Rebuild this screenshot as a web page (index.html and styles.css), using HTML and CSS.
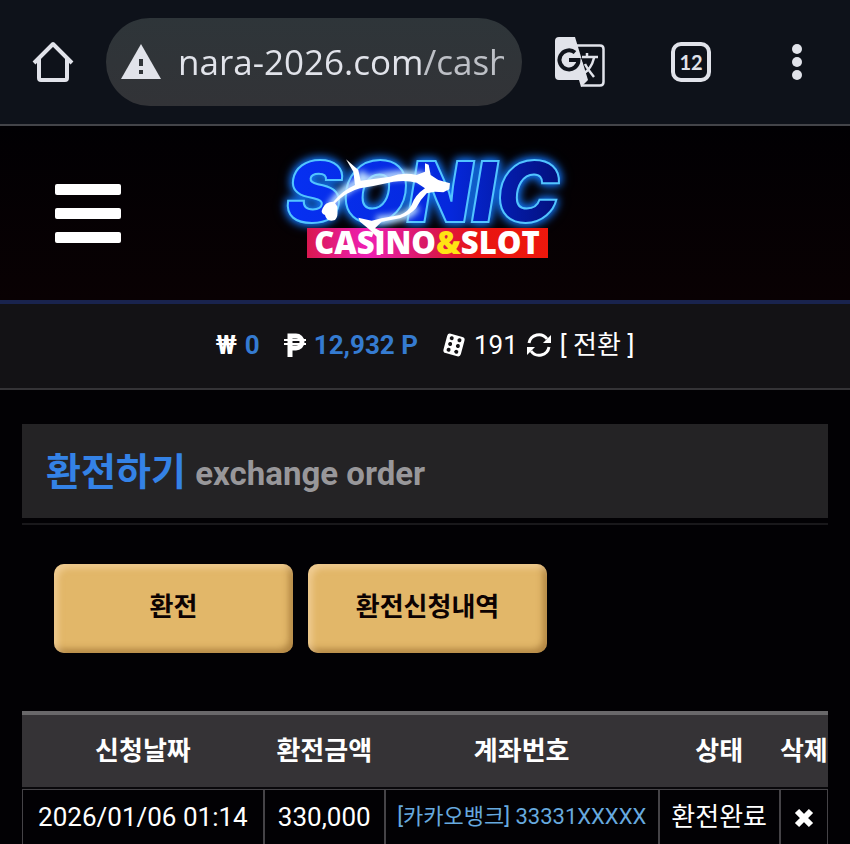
FILE: index.html
```html
<!DOCTYPE html>
<html lang="ko">
<head>
<meta charset="utf-8">
<meta name="viewport" content="width=device-width, initial-scale=1">
<title>환전하기</title>
<link rel="stylesheet" href="styles.css">
</head>
<body>
<div class="browser-bar">
  <button class="icon-button" aria-label="Home">
    <svg width="42" height="42" viewBox="0 0 42 42" fill="none" stroke="#e1e3ea" stroke-width="4" stroke-linejoin="round"><path d="M2 22 L21 3 L40 22 M7 18 V37 Q7 39 9 39 H33 Q35 39 35 37 V18"/></svg>
  </button>
  <div class="address">
    <svg width="42" height="36" viewBox="0 0 42 36"><path d="M21 0 L41 35 H1Z" fill="#e1e3ea"/><path d="M19 15h4v7h-4zM19 26h4v4h-4z" fill="#303438"/></svg>
    <input class="url" type="text" aria-label="URL" value="nara-2026.com/cash">
  </div>
  <button class="icon-button" aria-label="Translate">
    <svg width="50" height="50" viewBox="0 0 50 50"><path d="M22 8.500H45Q48.500 8.500 48.500 12V45Q48.500 48.500 45 48.500H26" fill="none" stroke="#e1e3ea" stroke-width="2.500"/><path d="M4 0H20L33 43L26 50L24 43H4Q0 43 0 39V4Q0 0 4 0Z" fill="#e1e3ea"/><path d="M20 15.500A9.500 9.500 0 1 0 23.500 23H14" fill="none" stroke="#10141c" stroke-width="4"/><path d="M26 21H37C36 26 34 29 32 31C29 28 28 25 26 21Z" fill="#10141c"/><path d="M27 20H43M32 16V20M39 21C37 29 33 34 28 37M30 27C32 31 35 35 39 40" fill="none" stroke="#e1e3ea" stroke-width="2.500"/></svg>
  </button>
  <button class="icon-button" aria-label="Tabs"><span class="tab-count">12</span></button>
  <button class="icon-button" aria-label="Menu">
    <svg width="12" height="38" viewBox="0 0 12 38" fill="#e1e3ea"><circle cx="6" cy="6" r="5"/><circle cx="6" cy="19" r="5"/><circle cx="6" cy="32" r="5"/></svg>
  </button>
</div>

<header class="site-header">
  <button class="hamburger" aria-label="메뉴"><span></span><span></span><span></span></button>
  <a class="logo" href="#" aria-label="SONIC CASINO&amp;SLOT">
    <svg width="310" height="120" viewBox="0 0 310 120">
      <defs>
        <linearGradient id="plate" x1="0" x2="1"><stop offset="0" stop-color="#d91850"/><stop offset=".25" stop-color="#ee20b4"/><stop offset=".5" stop-color="#d81860"/><stop offset=".7" stop-color="#e81412"/><stop offset="1" stop-color="#ee180c"/></linearGradient>
        <linearGradient id="blue" x1="0" x2="1"><stop offset="0" stop-color="#0630f2"/><stop offset=".6" stop-color="#0528dc"/><stop offset="1" stop-color="#03107c"/></linearGradient>
        <filter id="spark" x="-20%" y="-30%" width="140%" height="160%"><feGaussianBlur stdDeviation="10"/></filter>
      </defs>
      <text class="logo-word" x="16" y="69" fill="url(#blue)" stroke="#52c4ff" stroke-width="2">SONIC</text>
      <rect x="37" y="75" width="241" height="30" fill="url(#plate)"/>
      <text class="logo-sub" x="157" y="101" text-anchor="middle" fill="#fff">CASINO<tspan fill="#ffe313">&amp;</tspan>SLOT</text>
      <g transform="translate(40 -3) scale(.3333)">
        <path d="M60 175Q95 115 150 95L160 65M160 95Q280 60 350 85M320 170Q290 210 200 210" fill="none" stroke="#c4e6ff" stroke-width="24" filter="url(#spark)"/>
        <path d="M108 28L145 60L152 92L240 80Q280 65 320 75L345 65L345 40L356 44L362 75L385 90L420 100L418 118L400 127L375 125L350 130Q330 150 318 175Q300 195 270 205L215 215L195 235L215 245L212 315H200V260L180 240L150 215L145 203L185 212L215 205L270 195Q295 185 305 165Q315 135 345 115L320 98Q290 90 250 95L190 108L150 115Q110 125 75 160Q85 170 82 180Q85 200 75 210Q50 218 45 195Q30 190 38 175Q45 155 70 155Q100 120 135 105L130 65Z" fill="#fff"/>
      </g>
    </svg>
  </a>
</header>

<section class="wallet">
  <div class="wallet-item"><b>₩</b><b class="amount">0</b></div>
  <div class="wallet-item">
    <svg width="22" height="24" viewBox="0 0 22 24" fill="none" stroke="#fff"><path d="M6 24V3H12A5.500 5.500 0 0 1 12 15H6" stroke-width="5"/><path d="M0 7H22M0 11H22" stroke-width="2"/></svg>
    <b class="amount">12,932 P</b>
  </div>
  <div class="wallet-item">
    <svg width="24" height="24" viewBox="0 0 24 24"><g transform="rotate(15 12 12)"><rect x="3" y="2" width="18" height="20" rx="3" fill="#fff"/><g fill="#131215"><circle cx="8" cy="6" r="2"/><circle cx="16" cy="6" r="2"/><circle cx="8" cy="12" r="2"/><circle cx="16" cy="12" r="2"/><circle cx="8" cy="18" r="2"/><circle cx="16" cy="18" r="2"/></g></g></svg>
    <span>191</span>
    <button class="convert"><svg width="26" height="26" viewBox="0 0 26 26"><g fill="none" stroke="#fff" stroke-width="3"><path d="M3 11A10 10 0 0 1 21 7"/><path d="M23 15A10 10 0 0 1 5 19"/></g><path d="M25 3V11H17ZM1 23V15H9Z" fill="#fff"/></svg>[ 전환 ]</button>
  </div>
</section>

<main>
  <h1 class="page-title">환전하기 <small>exchange order</small></h1>
  <nav class="actions">
    <button class="gold">환전</button>
    <button class="gold">환전신청내역</button>
  </nav>
  <table>
    <colgroup><col class="c-date"><col class="c-amount"><col class="c-account"><col class="c-state"><col class="c-delete"></colgroup>
    <thead><tr><th>신청날짜</th><th>환전금액</th><th>계좌번호</th><th>상태</th><th>삭제</th></tr></thead>
    <tbody><tr>
      <td>2026/01/06 01:14</td><td>330,000</td><td class="account">[카카오뱅크] 33331XXXXX</td><td>환전완료</td>
      <td><button class="delete" aria-label="삭제"><svg width="20" height="20" viewBox="0 0 20 20"><path d="M3 3L17 17M17 3L3 17" stroke="#fff" stroke-width="6"/></svg></button></td>
    </tr></tbody>
  </table>
</main>
</body>
</html>
```
FILE: styles.css
```css
* { box-sizing: border-box; }
html { background: #020104; scrollbar-width: none; }
body { margin: 0; color: #fff; font: 26px/36px Roboto, "Noto Sans CJK KR", sans-serif; }
button { padding: 0; border: 0; background: none; color: inherit; font: inherit; cursor: pointer; }
svg { display: block; flex: none; overflow: visible; }

.browser-bar {
  display: grid;
  grid-template-columns: 106px minmax(0, 1fr) 116px 106px 106px;
  align-items: center;
  height: 126px;
  background: #0e121a;
  border-bottom: 2px solid #434449;
}
.icon-button { display: flex; justify-content: center; align-items: center; height: 88px; }
.address {
  display: flex;
  align-items: center;
  gap: 16px;
  height: 88px;
  padding: 0 18px 0 14px;
  border-radius: 44px;
  background: linear-gradient(#2e3539, #323337);
}
.url {
  flex: 1;
  min-width: 0;
  padding: 0;
  border: 0;
  outline: 0;
  background: none;
  color: #e1e3ea;
  font: 35px/48px "Open Sans", sans-serif;
  -webkit-mask-image: linear-gradient(90deg, #000 246px, rgba(0, 0, 0, .8) 246px);
  mask-image: linear-gradient(90deg, #000 246px, rgba(0, 0, 0, .8) 246px);
}
.tab-count {
  display: grid;
  place-items: center;
  width: 40px;
  height: 40px;
  border: 4px solid #e1e3ea;
  border-radius: 10px;
  color: #e1e3ea;
  font: 700 20px/24px Lato, sans-serif;
}

.site-header {
  display: grid;
  grid-template-columns: 1fr auto 1fr;
  align-items: center;
  height: 178px;
  padding: 0 55px;
  background: linear-gradient(#010003, #090103);
  border-bottom: 4px solid #19234d;
}
.hamburger { display: grid; gap: 13px; width: 66px; }
.hamburger span { height: 11px; border-radius: 2px; background: #fff; }
.logo-word {
  font: italic 900 84px Inter, sans-serif;
  filter: drop-shadow(0 0 4px #1478ff) drop-shadow(0 0 4px #0c50b0);
}
.logo-sub { font: 800 31px "Open Sans", sans-serif; }

.wallet {
  display: flex;
  justify-content: center;
  gap: 24px;
  height: 86px;
  padding-bottom: 2px;
  background: #131215;
  border-bottom: 2px solid #343336;
}
.wallet-item, .convert { display: flex; align-items: center; gap: 8px; }
.amount { color: #357bd1; }

main { padding: 34px 22px 0; }
.page-title {
  position: relative;
  height: 94px;
  margin: 0;
  padding: 0 24px;
  background: #242325;
  color: #3482e6;
  font: 700 38px/96px Roboto, "Noto Sans CJK KR", sans-serif;
}
.page-title::after {
  content: "";
  position: absolute;
  inset: auto 0 -7px;
  height: 2px;
  background: #19181b;
}
.page-title small { color: #98979a; font-size: 33px; }
.actions { display: flex; gap: 15px; padding: 46px 32px 58px; }
.gold {
  width: 239px;
  height: 89px;
  padding-bottom: 4px;
  border-radius: 10px;
  background: #e2b769;
  box-shadow: inset 4px 4px 6px rgba(255, 228, 190, .5), inset -4px -4px 6px rgba(130, 85, 30, .5);
  color: #0c0202;
  font-weight: 700;
}

table { width: 100%; table-layout: fixed; border-collapse: separate; border-spacing: 0; border-top: 4px solid #69686a; }
.c-date { width: 30%; }
.c-amount { width: 15%; }
.c-account { width: 34%; }
.c-state { width: 15%; }
.c-delete { width: 6%; }
th, td { padding: 0; text-align: center; white-space: nowrap; }
th { height: 74px; background: #353336; border-bottom: 2px solid #09080b; }
td { height: 56px; border: 1px solid #454347; }
.account { color: #67a9df; font-size: 22px; }
.delete { display: inline-grid; place-items: center; height: 36px; vertical-align: middle; }
```
